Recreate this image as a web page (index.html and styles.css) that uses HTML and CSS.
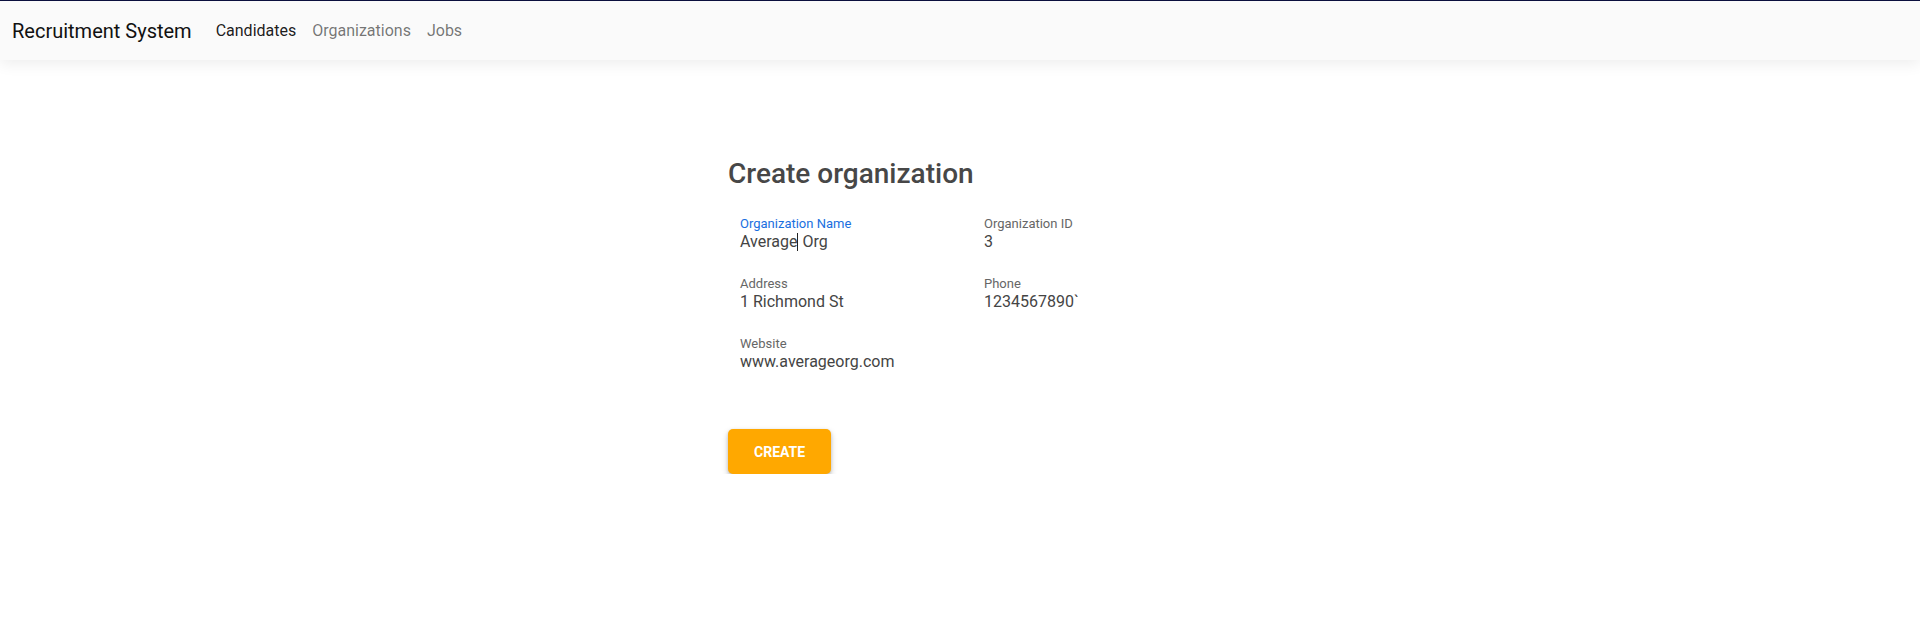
FILE: index.html
```html
<!DOCTYPE html>
<html lang="en">
<head>
<meta charset="utf-8">
<title>Recruitment System</title>
<link rel="stylesheet" href="styles.css">
</head>
<body>
<header class="navbar">
  <a class="brand" href="#">Recruitment System</a>
  <nav class="nav">
    <a class="nav-link active" href="#">Candidates</a>
    <a class="nav-link" href="#">Organizations</a>
    <a class="nav-link" href="#">Jobs</a>
  </nav>
</header>
<main class="container">
  <h1 class="title">Create organization</h1>
  <form class="form">
    <div class="grid">
      <div class="field">
        <label class="label focused">Organization Name</label>
        <div class="value">Average<span class="caret"></span> Org</div>
      </div>
      <div class="field">
        <label class="label">Organization ID</label>
        <div class="value">3</div>
      </div>
      <div class="field">
        <label class="label">Address</label>
        <div class="value">1 Richmond St</div>
      </div>
      <div class="field">
        <label class="label">Phone</label>
        <div class="value">1234567890`</div>
      </div>
      <div class="field">
        <label class="label">Website</label>
        <div class="value">www.averageorg.com</div>
      </div>
    </div>
    <button type="button" class="btn">CREATE</button>
  </form>
</main>
</body>
</html>
```

FILE: styles.css
```css
* { box-sizing: border-box; }
html, body { margin: 0; padding: 0; background: #fff; }
body { font-family: Roboto, "Noto Sans", Arial, sans-serif; color: #444; }

.navbar {
  height: 60px;
  border-top: 1px solid #0b0f3d;
  background: #fafafa;
  display: flex;
  align-items: center;
  padding: 0 12px;
  box-shadow: 0 4px 14px rgba(0, 0, 0, 0.07);
  position: relative;
}
.brand {
  font-size: 20px;
  color: #111;
  text-decoration: none;
  margin-right: 16px;
  line-height: 28px;
}
.nav { display: flex; }
.nav-link {
  font-size: 16px;
  padding: 0 8px;
  color: rgba(0, 0, 0, 0.55);
  text-decoration: none;
  line-height: 24px;
}
.nav-link.active { color: rgba(0, 0, 0, 0.9); }

.container {
  width: 464px;
  margin: 0 auto;
  padding-top: 95px;
}
.title {
  margin: 0;
  font-size: 28px;
  line-height: 38px;
  font-weight: 500;
  color: #474747;
}
.form { padding-top: 23px; }
.grid {
  display: grid;
  grid-template-columns: 244px 220px;
  padding-left: 12px;
}
.field {
  display: flex;
  flex-direction: column;
  padding-bottom: 24px;
}
.label {
  font-size: 13px;
  line-height: 16px;
  color: #666;
}
.label.focused { color: #1a6fe0; }
.value {
  font-size: 16px;
  line-height: 20px;
  color: #444;
}
.caret {
  display: inline-block;
  width: 1px;
  height: 18px;
  background: #222;
  vertical-align: -4px;
}
.btn {
  margin-top: 33px;
  height: 45px;
  padding: 0 26px;
  border: none;
  border-radius: 5px;
  background: #ffa800;
  color: #fff;
  font-family: Roboto, Arial, sans-serif;
  font-size: 14px;
  font-weight: 700;
  box-shadow: 0 3px 6px rgba(0, 0, 0, 0.22), 0 1px 3px rgba(0, 0, 0, 0.14);
}
```
